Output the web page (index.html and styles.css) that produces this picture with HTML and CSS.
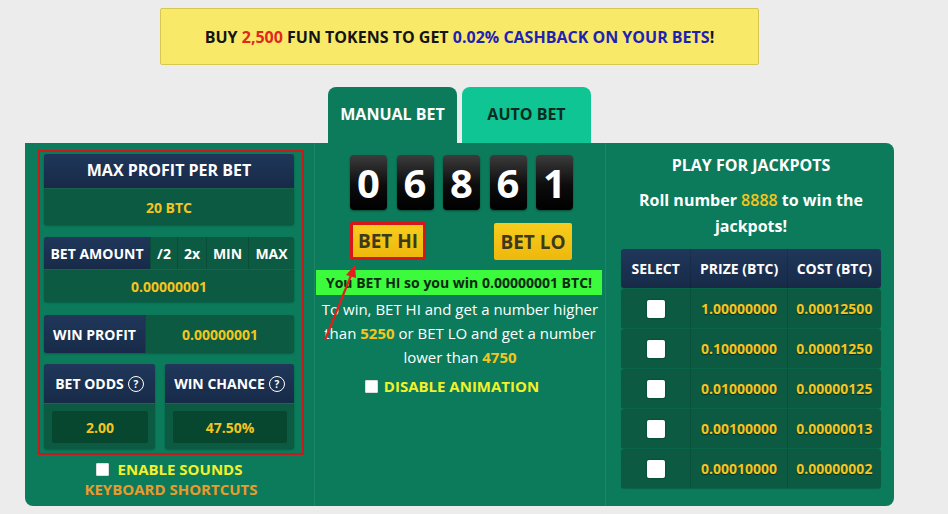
FILE: index.html
```html
<!DOCTYPE html>
<html lang="en">
<head>
  <meta charset="UTF-8">
  <meta name="viewport" content="width=device-width, initial-scale=1.0">
  <title>Dice</title>
  <link rel="stylesheet" href="styles.css">
</head>
<body>
  <div class="banner">
    <span>BUY <span class="red">2,500</span> FUN TOKENS TO GET <span class="blue">0.02% CASHBACK ON YOUR BETS</span>!</span>
  </div>

  <div class="tabs">
    <div class="tab active">MANUAL BET</div>
    <div class="tab">AUTO BET</div>
  </div>

  <div class="panel">
    <!-- left column: bet settings -->
    <div class="col col-left">
      <div class="redbox">
        <div class="card">
          <div class="card-head big">MAX PROFIT PER BET</div>
          <div class="card-val tall">20 BTC</div>
        </div>

        <div class="card mt12">
          <div class="amount-row">
            <div class="cell navy w106">BET AMOUNT</div>
            <div class="cell w27">/2</div>
            <div class="cell w29">2x</div>
            <div class="cell w42">MIN</div>
            <div class="cell grow">MAX</div>
          </div>
          <div class="card-val">0.00000001</div>
        </div>

        <div class="card profit-row">
          <div class="cell navy w101">WIN PROFIT</div>
          <div class="cell yellow grow">0.00000001</div>
        </div>

        <div class="odds">
          <div class="card">
            <div class="card-head odds-head">BET ODDS <span class="help">?</span></div>
            <div class="odds-body"><div class="odds-val">2.00</div></div>
          </div>
          <div class="card">
            <div class="card-head odds-head">WIN CHANCE <span class="help">?</span></div>
            <div class="odds-body"><div class="odds-val">47.50%</div></div>
          </div>
        </div>
      </div>

      <div class="option first"><span class="check"></span><span>ENABLE SOUNDS</span></div>
      <div class="shortcuts">KEYBOARD SHORTCUTS</div>
    </div>

    <!-- middle column: roll -->
    <div class="col col-mid">
      <div class="digits">
        <div class="digit">0</div>
        <div class="digit">6</div>
        <div class="digit">8</div>
        <div class="digit">6</div>
        <div class="digit">1</div>
      </div>
      <div class="bet-buttons">
        <button class="bet-btn marked">BET HI</button>
        <button class="bet-btn">BET LO</button>
      </div>
      <div class="result">You BET HI so you win 0.00000001 BTC!</div>
      <p class="rules">To win, BET HI and get a number higher than <b>5250</b> or BET LO and get a number lower than <b>4750</b></p>
      <div class="option anim"><span class="check"></span><span>DISABLE ANIMATION</span></div>

      <svg class="arrow" viewBox="0 0 40 80" xmlns="http://www.w3.org/2000/svg">
        <line x1="4" y1="77" x2="31" y2="10" stroke="#e0201c" stroke-width="2.2"/>
        <polygon points="34,2 25,12 35,15" fill="#e0201c"/>
      </svg>
    </div>

    <!-- right column: jackpots -->
    <div class="col col-right">
      <div class="jp-title">PLAY FOR JACKPOTS</div>
      <div class="jp-text">Roll number <span class="num">8888</span> to win the jackpots!</div>
      <div class="jp-table">
        <div class="jp-row jp-head">
          <div class="jc c1">SELECT</div>
          <div class="jc c2">PRIZE (BTC)</div>
          <div class="jc c3">COST (BTC)</div>
        </div>
        <div class="jp-row">
          <div class="jc c1"><span class="box"></span></div>
          <div class="jc c2">1.00000000</div>
          <div class="jc c3">0.00012500</div>
        </div>
        <div class="jp-row">
          <div class="jc c1"><span class="box"></span></div>
          <div class="jc c2">0.10000000</div>
          <div class="jc c3">0.00001250</div>
        </div>
        <div class="jp-row">
          <div class="jc c1"><span class="box"></span></div>
          <div class="jc c2">0.01000000</div>
          <div class="jc c3">0.00000125</div>
        </div>
        <div class="jp-row">
          <div class="jc c1"><span class="box"></span></div>
          <div class="jc c2">0.00100000</div>
          <div class="jc c3">0.00000013</div>
        </div>
        <div class="jp-row">
          <div class="jc c1"><span class="box"></span></div>
          <div class="jc c2">0.00010000</div>
          <div class="jc c3">0.00000002</div>
        </div>
      </div>
    </div>
  </div>
</body>
</html>
```

FILE: styles.css
```css
:root {
  --page: #ececec;
  --green: #0b7b5b;
  --cell: #0b5a41;
  --cell-dark: #07472f;
  --navy: #1b2f4f;
  --gold: #f4c520;
  --lime: #f3f02a;
}

body {
  margin: 0;
  background: var(--page);
  font-family: 'Open Sans', 'DejaVu Sans', sans-serif;
  width: 948px;
  height: 514px;
  overflow: hidden;
}

.banner {
  margin: 8px 0 0 160px;
  width: 597px;
  height: 55px;
  background: #f8ea68;
  border: 1px solid #d6c74e;
  border-radius: 2px;
  font-size: 16px;
  font-weight: 700;
  color: #141414;
  display: flex;
  align-items: center;
  justify-content: center;
  box-sizing: content-box;
}

.red { color: #e0281c; }
.blue { color: #1e22b4; }

.tabs {
  display: flex;
  gap: 5px;
  margin: 22px 0 0 328px;
}

.tab {
  width: 129px;
  height: 56px;
  border-radius: 8px 8px 0 0;
  background: #0ec593;
  color: #0b2a20;
  font-size: 16px;
  font-weight: 700;
  display: flex;
  align-items: center;
  justify-content: center;
  padding-bottom: 2px;
  box-sizing: border-box;
}

.tab.active {
  background: var(--green);
  color: #fff;
}

.panel {
  margin-left: 25px;
  width: 869px;
  height: 363px;
  background: var(--green);
  border-radius: 0 8px 8px 8px;
  display: grid;
  grid-template-columns: 289px 291px 289px;
}

.col {
  position: relative;
  box-sizing: border-box;
}

.col-mid,
.col-right {
  border-left: 1px solid rgba(255, 255, 255, 0.08);
}

/* left column */

.col-left {
  padding: 7px 0 0 13px;
}

.redbox {
  width: 266px;
  height: 305px;
  border: 2px solid #c8191c;
  box-sizing: border-box;
  padding: 2px 8px 0 4px;
}

.card {
  border-radius: 3px;
  overflow: hidden;
  background: var(--cell);
  box-shadow: 0 1px 2px rgba(0, 0, 0, 0.25);
}

.mt12 { margin-top: 12px; }

.card-head {
  background: linear-gradient(#20375a, #172a48);
  color: #fff;
  font-weight: 700;
  display: flex;
  align-items: center;
  justify-content: center;
}

.card-head.big {
  height: 34px;
  font-size: 16px;
  padding-bottom: 2px;
  box-sizing: border-box;
}

.card-val {
  height: 32px;
  color: var(--gold);
  font-size: 14px;
  font-weight: 700;
  display: flex;
  align-items: center;
  justify-content: center;
  border-top: 1px solid rgba(255, 255, 255, 0.06);
}

.card-val.tall {
  height: 36px;
}

.amount-row {
  display: flex;
  height: 32px;
}

.cell {
  display: flex;
  align-items: center;
  justify-content: center;
  color: #fff;
  font-size: 14px;
  font-weight: 700;
  border-left: 1px solid rgba(0, 0, 0, 0.15);
  box-sizing: border-box;
}

.cell.navy {
  background: linear-gradient(#20375a, #172a48);
  border-left: none;
}

.cell.yellow { color: var(--gold); }

.w106 { width: 106px; }
.w27 { width: 27px; }
.w29 { width: 29px; }
.w42 { width: 42px; }
.w101 { width: 101px; }
.grow { flex: 1; }

.profit-row {
  display: flex;
  height: 38px;
  margin-top: 13px;
}

.odds {
  display: grid;
  grid-template-columns: 111px 129px;
  gap: 10px;
  margin-top: 11px;
}

.odds-head {
  height: 39px;
  font-size: 14px;
  gap: 4px;
}

.help {
  width: 14px;
  height: 14px;
  border: 1.5px solid #fff;
  border-radius: 50%;
  font-size: 10px;
  line-height: 14px;
  text-align: center;
}

.odds-body {
  height: 46px;
  padding: 7px 7px 6px 8px;
  box-sizing: border-box;
  border-top: 1px solid rgba(255, 255, 255, 0.07);
}

.odds-val {
  height: 32px;
  background: var(--cell-dark);
  border-radius: 2px;
  color: var(--gold);
  font-size: 14px;
  font-weight: 700;
  display: flex;
  align-items: center;
  justify-content: center;
}

.option {
  display: flex;
  align-items: center;
  justify-content: center;
  gap: 6px;
  color: var(--lime);
  font-size: 15px;
  font-weight: 700;
  line-height: 20px;
}

.option.first {
  margin-top: 4px;
  width: 266px;
  gap: 9px;
  padding-right: 4px;
  box-sizing: border-box;
}

.check {
  width: 11px;
  height: 11px;
  background: #fff;
  border: 1px solid #ddd;
  border-radius: 1px;
}

.shortcuts {
  width: 266px;
  text-align: center;
  color: #eb9a2c;
  font-size: 15px;
  font-weight: 700;
  line-height: 20px;
}

/* middle column */

.col-mid {
  padding-top: 12px;
}

.digits {
  display: flex;
  justify-content: center;
  gap: 9.5px;
  padding-left: 3px;
}

.digit {
  width: 37px;
  height: 55px;
  border-radius: 4px;
  background: linear-gradient(#3c3c3c, #0c0c0c 55%, #000);
  color: #fff;
  font-size: 40px;
  font-weight: 700;
  display: flex;
  align-items: center;
  justify-content: center;
  box-shadow: 0 1px 2px rgba(0, 0, 0, 0.4);
}

.bet-buttons {
  display: flex;
  justify-content: space-between;
  margin: 12px 33px 0 35px;
}

.bet-btn {
  width: 78px;
  height: 37px;
  border: none;
  border-radius: 2px;
  background: linear-gradient(#f7cc1c, #eeb80c);
  color: #3d3a1c;
  font-family: inherit;
  font-size: 19px;
  font-weight: 700;
  padding: 0;
  margin-top: 1px;
}

.bet-btn.marked {
  width: 76px;
  height: 38px;
  margin-top: 0;
  border: 3px solid #d8161a;
}

.result {
  margin: 10px 3px 0 1px;
  height: 25px;
  background: #3cfb3c;
  color: #0c2a10;
  font-size: 14px;
  font-weight: 700;
  display: flex;
  align-items: center;
  justify-content: center;
}

.rules {
  margin: 2px 0 0;
  padding: 0 6px;
  color: #fff;
  font-size: 15px;
  line-height: 24px;
  text-align: center;
}

.rules b {
  color: var(--gold);
}

.option.anim {
  margin-top: 7px;
  padding-right: 16px;
}

.arrow {
  position: absolute;
  left: 6px;
  top: 120px;
  width: 40px;
  height: 80px;
}

/* right column */

.col-right {
  padding: 11px 0 0 15px;
}

.jp-title {
  width: 260px;
  text-align: center;
  color: #fff;
  font-size: 16px;
  font-weight: 700;
  line-height: 22px;
}

.jp-text {
  width: 260px;
  margin-top: 11px;
  text-align: center;
  color: #fff;
  font-size: 16px;
  font-weight: 700;
  line-height: 26px;
}

.jp-text .num {
  color: var(--gold);
  font-weight: 600;
}

.jp-table {
  margin-top: 10px;
  width: 260px;
  display: flex;
  flex-direction: column;
  gap: 1px;
}

.jp-row {
  display: flex;
  height: 39px;
  background: var(--cell);
  border-radius: 3px;
  box-shadow: 0 1px 1px rgba(0, 0, 0, 0.2);
}

.jp-row.jp-head {
  background: linear-gradient(#20375a, #172a48);
}

.jc {
  display: flex;
  align-items: center;
  justify-content: center;
  font-size: 14px;
  font-weight: 700;
  color: var(--gold);
  text-shadow: 0 1px 1px rgba(0, 0, 0, 0.5);
  border-left: 1px solid rgba(0, 0, 0, 0.12);
}

.jp-head .jc {
  color: #fff;
  text-shadow: none;
}

.c1 { width: 70px; border-left: none; }
.c2 { width: 96px; }
.c3 { width: 94px; }

.box {
  width: 18px;
  height: 18px;
  background: #fff;
  border-radius: 2px;
  box-shadow: 0 0 2px rgba(0, 0, 0, 0.4);
}
```
